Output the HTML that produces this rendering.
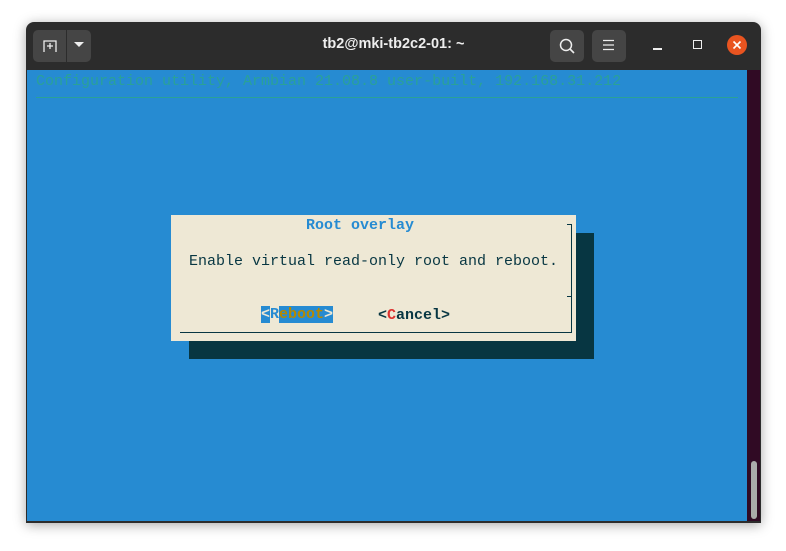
<!DOCTYPE html>
<html><head><style>
*{margin:0;padding:0;box-sizing:border-box}
body{width:786px;height:551px;background:#fff;position:relative;overflow:hidden;font-family:"Liberation Sans",sans-serif}
.win{position:absolute;left:26px;top:22px;width:735px;height:501px;background:#2c2c2c;border-radius:8px 8px 0 0;box-shadow:0 2px 12px rgba(0,0,0,.35);overflow:hidden}
.btn{position:absolute;background:#454545;border-radius:5px}
.term{position:absolute;left:1px;top:48px;width:720px;height:451px;background:#268bd2}
.strip{position:absolute;left:721px;top:48px;width:13px;height:451px;background:#300a24}
.mono{font-family:"Liberation Mono",monospace;font-size:15px;line-height:18px;position:absolute;white-space:pre}
</style></head><body>
<div class="win">
 <div class="btn" style="left:7px;top:8px;width:58px;height:32px;border-radius:5px"></div>
 <div style="position:absolute;left:40px;top:8px;width:1px;height:32px;background:#2c2c2c"></div>
 <svg style="position:absolute;left:16px;top:16px" width="18" height="16"><path d="M2 14V3h12v11M5 8h6M8 5v6" stroke="#eee" stroke-width="1.3" fill="none"/></svg>
 <svg style="position:absolute;left:47px;top:19px" width="12" height="8"><path d="M1 1h10L6 6z" fill="#eee"/></svg>
 <div style="position:absolute;left:0;width:735px;top:14px;text-align:center;color:#eee;font-weight:bold;font-size:14.5px">tb2@mki-tb2c2-01: ~</div>
 <div class="btn" style="left:524px;top:8px;width:34px;height:32px"></div>
 <svg style="position:absolute;left:532px;top:15px" width="18" height="18"><circle cx="8" cy="8" r="5.5" stroke="#eee" stroke-width="1.5" fill="none"/><path d="M12 12l4 4" stroke="#eee" stroke-width="1.6"/></svg>
 <div class="btn" style="left:566px;top:8px;width:34px;height:32px"></div>
 <svg style="position:absolute;left:576px;top:17px" width="14" height="12"><path d="M1 1.5h11M1 6h11M1 10.5h11" stroke="#eee" stroke-width="1.3"/></svg>
 <div style="position:absolute;left:627px;top:26px;width:9px;height:1.5px;background:#eee"></div>
 <div style="position:absolute;left:667px;top:18px;width:9px;height:9px;border:1.5px solid #eee"></div>
 <div style="position:absolute;left:701px;top:13px;width:20px;height:20px;border-radius:50%;background:#e95420"></div>
 <svg style="position:absolute;left:706px;top:18px" width="10" height="10"><path d="M1.5 1.5l7 7M8.5 1.5l-7 7" stroke="#fff" stroke-width="1.6"/></svg>
 <div class="term"></div>
 <div class="strip"></div>
 <div style="position:absolute;left:725px;top:439px;width:6px;height:58px;background:#aaa;border-radius:3px"></div>
</div>
<div class="mono" style="left:36px;top:73px;color:#2aa198">Configuration utility, Armbian 21.08.8 user-built, 192.168.31.212</div>
<div style="position:absolute;left:36px;top:97px;width:702px;height:1px;background:#2aa198"></div>
<div style="position:absolute;left:189px;top:233px;width:405px;height:126px;background:#073642"></div>
<div style="position:absolute;left:171px;top:215px;width:405px;height:126px;background:#eee8d5"></div>
<div style="position:absolute;left:180px;top:332px;width:392px;height:1px;background:#073642"></div>
<div style="position:absolute;left:571px;top:224px;width:1px;height:109px;background:#073642"></div>
<div style="position:absolute;left:567px;top:224px;width:5px;height:1px;background:#073642"></div>
<div style="position:absolute;left:567px;top:296px;width:5px;height:1px;background:#073642"></div>
<div class="mono" style="left:306px;top:217px;color:#268bd2;font-weight:bold">Root overlay</div>
<div class="mono" style="left:189px;top:253px;color:#073642">Enable virtual read-only root and reboot.</div>
<div class="mono" style="left:261px;top:306px;font-weight:bold"><span style="background:#268bd2;color:#eee8d5">&lt;</span><span style="color:#268bd2">R</span><span style="background:#268bd2;color:#b58900">eboot</span><span style="background:#268bd2;color:#eee8d5">&gt;</span></div>
<div class="mono" style="left:378px;top:307px;font-weight:bold;color:#073642">&lt;<span style="color:#dc322f">C</span>ancel&gt;</div>
</body></html>
